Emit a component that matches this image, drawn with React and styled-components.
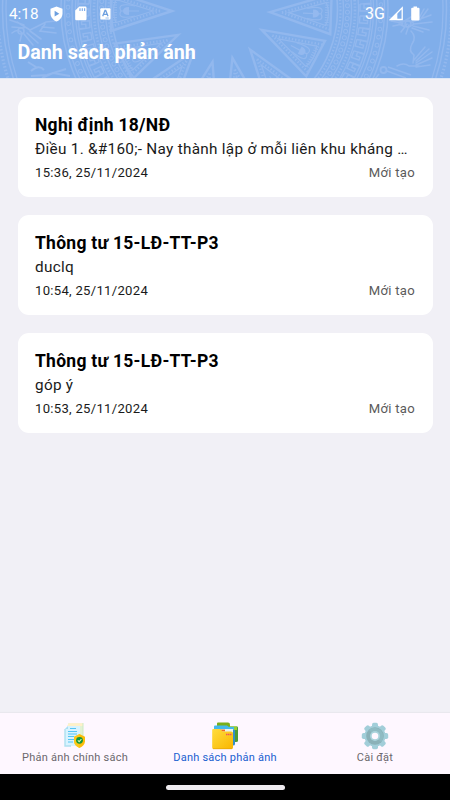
import React from 'react';
import styled, { createGlobalStyle } from 'styled-components';

const GlobalStyle = createGlobalStyle`
  * { box-sizing: border-box; }
  body { margin: 0; font-family: Roboto, 'Noto Sans', sans-serif; }
`;

const Screen = styled.div`
  width: 450px;
  height: 800px;
  display: flex;
  flex-direction: column;
  overflow: hidden;
  background: #f1f0f6;
`;

const Header = styled.header`
  position: relative;
  height: 79px;
  flex: none;
  overflow: hidden;
  background: #80aeea;
  color: #fff;
`;

const Pattern = styled.svg`
  position: absolute;
  inset: 0;
`;

const HeaderContent = styled.div`
  position: relative;
`;

const StatusBar = styled.div`
  height: 27px;
  padding: 0 30px 0 9px;
  display: flex;
  align-items: center;
`;

const StatusText = styled.span`
  font-size: ${(p) => p.$size}px;
  line-height: 27px;
  padding-top: ${(p) => p.$drop || 0}px;
  width: ${(p) => p.$width}px;
  white-space: nowrap;
`;

const StatusIcons = styled.div`
  display: flex;
  align-items: center;
  flex: 1;
`;

const PageTitle = styled.h1`
  margin: 0;
  padding-left: 17.5px;
  font-size: 19.7px;
  line-height: 24px;
  margin-top: 14px;
  font-weight: 700;
`;

const List = styled.main`
  flex: 1;
  padding: 17.5px;
  display: flex;
  flex-direction: column;
  gap: 17.5px;
`;

const Card = styled.article`
  height: 100.5px;
  flex: none;
  padding: 16px 17.5px 0;
  border-radius: 11px;
  background: #fff;
  color: #000;
`;

const CardTitle = styled.h2`
  margin: 0 0 -1px;
  font-size: 17.5px;
  line-height: 25px;
  font-weight: 700;
  letter-spacing: 0.27px;
`;

const CardText = styled.p`
  margin: 0 0 1px;
  font-size: 15.3px;
  line-height: 24px;
  letter-spacing: 0.29px;
  color: #1a1a1a;
  white-space: nowrap;
`;

const CardMeta = styled.div`
  display: flex;
  justify-content: space-between;
  font-size: 13.1px;
  line-height: 22px;
  letter-spacing: 0.29px;
  color: #1a1a1a;
`;

const Status = styled.span`
  color: #5a5a5a;
`;

const Nav = styled.nav`
  height: 61px;
  flex: none;
  display: grid;
  grid-template-columns: repeat(3, 1fr);
  background: #fef7ff;
  box-shadow: 0 -1px 1px rgba(0, 0, 0, 0.03);
`;

const NavItem = styled.div`
  display: flex;
  flex-direction: column;
  align-items: center;
  padding-top: 9px;
  font-size: 11px;
  line-height: 16px;
  letter-spacing: 0.23px;
  color: ${(p) => (p.$active ? '#1a5fd0' : '#6b686d')};
  white-space: nowrap;

  svg { display: block; }
`;

const GestureBar = styled.div`
  height: 26px;
  flex: none;
  display: flex;
  justify-content: center;
  padding-top: 10.5px;
  background: #000;
`;

const Handle = styled.div`
  width: 119px;
  height: 5px;
  border-radius: 3px;
  background: #eeebef;
`;

const spikes = [
  [174, 11, 180], [180, 34, 154], [195, 50, 128], [213, 60, 104],
  [232, 56, 78], [249, 48, 54], [260, 29, 28], [268, 12, 2],
  [182, -14, 206], [262, -14, -26],
];

function Spike({ x, y, angle }) {
  return (
    <g transform={`translate(${x} ${y}) rotate(${angle})`}>
      <path d="M2 0 63 -20 V20Z" strokeWidth="2.4" />
      <path d="M14 0 64 -16 M14 0 64 16" strokeWidth="2.4" strokeDasharray="1.3 2" />
      <path d="M21 0 58 -11.5 Q63 0 58 11.5Z" strokeWidth="1.3" />
      <path d="M35 0H53 M39 -5Q58 -9 53 0Q58 9 39 5" strokeWidth="1.2" />
      <path d="M45 -4Q51 -4 51 0Q51 4 45 4Z" fill="#94b9ef" stroke="none" />
      <path d="M59 -12V12" strokeWidth="4" strokeDasharray="1 1.5" />
    </g>
  );
}

function Bird() {
  return (
    <g strokeWidth="1.5" strokeLinecap="round">
      <path d="M0 5 14 10 22 5 M2 9 13 11 M4 14 14 12 M12 20 18 12 M17 22 20 13" />
      <path d="M10 11Q20 5 25 12Q19 17 12 13M23 10 42 3M25 12 43 10M24 14 40 18M29 8 35 -3M31 8 39 -3M23 16 34 20" />
      <circle cx="19" cy="12" r="3" />
      <path d="M22 19Q28 25 23 32Q19 39 25 43L24 51M25 48 36 35M27 49 40 37M27 51 43 40M27 53 43 46M27 55 41 53M8 54Q15 50 20 54L30 54" />
    </g>
  );
}

function DrumPattern() {
  const ring = (r, width, dash) => (
    <circle key={`${r}-${width}`} cx="224.5" cy="10" r={r} strokeWidth={width} strokeDasharray={dash} />
  );
  const motifs = [];
  for (let a = -20; a <= 200; a += 3) {
    motifs.push(
      <g key={a} transform={`rotate(${a} 224.5 10)`}>
        <circle cx="347.5" cy="10" r="2" strokeWidth="1" />
        <circle cx="381" cy="10" r="1.9" strokeWidth="1" />
      </g>
    );
  }
  const keys = [];
  for (let a = -20; a <= 200; a += 5) {
    keys.push(
      <path
        key={a}
        transform={`rotate(${a} 224.5 10)`}
        d="M360 4V11H368V8H364V4H371V16H360"
        strokeWidth="1.4"
      />
    );
  }
  return (
    <Pattern width="450" height="79" fill="none" stroke="#92b8ee">
      {spikes.map(([x, y, a]) => <Spike key={`${x}-${a}`} x={x} y={y} angle={a} />)}
      {ring(113, 1.6)}
      {ring(116, 2.2, '1.4 2')}
      {ring(119, 1.4)}
      {ring(127, 1.4)}
      {ring(130.5, 2.6, '1.4 1.8')}
      {ring(134, 1.2)}
      {ring(149, 1.3)}
      {ring(152.5, 1.4)}
      {ring(160, 1.4)}
      {ring(163.5, 1.5)}
      {motifs}
      {keys}
      {ring(218.5, 1.3)}
      {ring(222, 1.5)}
      {ring(227, 3.2, '1.5 2')}
      <g transform="translate(389 12)"><Bird /></g>
      <g strokeWidth="1.6" strokeLinecap="round">
        <path d="M10 20 24 25M12 27 24 28M17 22 30 30 46 22 56 21M30 31 41 39M27 33 38 43M24 34 33 45M45 24 40 31 56 33M42 27 54 28M12 33Q18 28 22 33L20 41" />
        <circle cx="21" cy="31" r="3" />
      </g>
      <circle cx="383.5" cy="70" r="3" strokeWidth="1.8" />
      <path d="M388 67 411 75 M387 71 406 78 M379 74 375 79" strokeWidth="1.5" />
      <path d="M31 71Q39 64 44 70M31 76 47 75 66 69M42 78 53 73 70 76M36 67 28 62" strokeWidth="2" />
      <path d="M0 78.5H450" stroke="#dce7f7" strokeWidth="1" />
    </Pattern>
  );
}

const ShieldPlay = () => (
  <svg width="13" height="16" viewBox="0 0 13 16">
    <path d="M6.5 .5 12.5 2.7V7.5C12.5 11 10 14.2 6.5 15.5 3 14.2 .5 11 .5 7.5V2.7Z" fill="#fff" />
    <path d="M4.6 4.8 9.3 7.8 4.6 10.5Z" fill="#6c9fdf" />
  </svg>
);

const SdCard = () => (
  <svg width="12" height="15" viewBox="0 0 12 15">
    <path d="M4.3 .5H10.3Q11.5 .5 11.5 1.7V13Q11.5 14.3 10.3 14.3H1.4Q.2 14.3 .2 13V4.6Z" fill="#fff" />
    <path d="M5 2.3V5M7.3 2.3V5M9.6 2.3V5" stroke="#80aeea" strokeWidth="1.2" />
  </svg>
);

const LetterBadge = () => (
  <svg width="11" height="12" viewBox="0 0 11 12">
    <rect x=".3" y=".3" width="10.2" height="11.2" rx="1" fill="#fff" />
    <path d="M2.7 8.2 5 2.5H5.7L8 8.2M3.7 6.4H7" fill="none" stroke="#6c9fdf" strokeWidth="1.3" />
    <path d="M5.5 10H8.8" stroke="#80aeea" strokeWidth=".8" />
  </svg>
);

const Signal = () => (
  <svg width="15" height="15" viewBox="0 0 15 15">
    <path d="M1.5 13.5 13.2 1.8V13.5Z" fill="none" stroke="#fff" strokeWidth="1.3" />
    <path d="M1 14 8.3 7V14Z" fill="#fff" />
  </svg>
);

const Battery = () => (
  <svg width="9" height="15" viewBox="0 0 9 15">
    <path d="M2.5 .4H6V1.8H7.5Q8.5 1.8 8.5 2.8V13.5Q8.5 14.5 7.5 14.5H1.2Q.2 14.5 .2 13.5V2.8Q.2 1.8 1.2 1.8H2.5Z" fill="#fff" />
  </svg>
);

const At = styled.span`
  display: flex;
  margin-left: ${(p) => p.$gap}px;
`;

const DocumentIcon = () => (
  <svg width="28" height="28" viewBox="0 0 28 28">
    <path d="M7 1.3H22V23H7Z" fill="#e2f2d4" />
    <path d="M8 1.3H22V4H6Z" fill="#fff0c9" />
    <path d="M22 1V16" stroke="#cdebc5" />
    <path d="M7 4H19V24H4V7Z" fill="#d8f3ff" />
    <path d="M4 7V24H10" fill="none" stroke="#aee0f0" strokeWidth="1.4" />
    <path d="M7 4V7H4Z" fill="#a9dff2" />
    <path d="M9 6.5H15M7 9.5H16M7 12H16M7 14.5H13M7 17.5H13M7 20H12" stroke="#55c5f4" strokeWidth="1" />
    <path d="M18.5 12 24 14.7V19.5Q23.5 23.5 18.5 26 13.5 23.5 13 19.5V14.7Z" fill="#fbbd0a" />
    <path d="M18.5 12V26Q13.5 23.5 13 19.5V14.7Z" fill="#ffcf25" opacity=".6" />
    <circle cx="18.5" cy="18.3" r="3.4" fill="#14963a" />
    <path d="M16.8 18.3 18.2 19.6 20.4 17.2" fill="none" stroke="#d8f4b4" strokeWidth="1.1" />
  </svg>
);

const FoldersIcon = () => (
  <svg width="28" height="28" viewBox="0 0 28 28">
    <defs>
      <linearGradient id="folder" x2="1" y2="1">
        <stop stopColor="#ffdd3e" />
        <stop offset="1" stopColor="#f9b600" />
      </linearGradient>
    </defs>
    <path d="M6 1.3Q6 .5 7 .5H17Q19 .5 19 2.5V5H6Z" fill="#79ae19" />
    <path d="M18 4.5H26Q27 4.5 27 5.5V19Q27 20 25 20H18Z" fill="#4d9b36" />
    <path d="M18 4.5H26V8H18Z" fill="#99ce32" />
    <path d="M3 4.7Q3 3.6 4 3.6H16L18 5H23V8H3Z" fill="#44b9eb" />
    <path d="M17 8H24V22Q24 23.5 22 23.5H17Z" fill="#348fc8" />
    <path d="M18 8.5H22V21H18Z" fill="#a8e5f5" />
    <path d="M10 7H22V11H10Z" fill="#e9f3ee" />
    <path d="M10 7.5H14V9.5H10Z" fill="#f06a22" />
    <path d="M1.2 8Q1.2 7 2.2 7H9.5L11.5 9.5H20Q22 9.5 22 11V25.5Q22 27 20.5 27H2.7Q1.2 27 1.2 25.5Z" fill="url(#folder)" />
    <path d="M15 12.5H20.5" stroke="#ef5360" strokeWidth="1.3" strokeDasharray="1.5 .5" />
    <path d="M2 26.7H21" stroke="#e7a40a" strokeWidth=".7" />
  </svg>
);

const GearIcon = () => (
  <svg width="28" height="28" viewBox="0 0 28 28">
    <g fill="#a2ced9">
      {[0, 45, 90, 135].map((a) => (
        <rect key={a} x="11" y=".8" width="6" height="26.4" rx="1.7" transform={`rotate(${a} 14 14)`} />
      ))}
      <circle cx="14" cy="14" r="10.6" />
    </g>
    <circle cx="14" cy="14" r="8.8" fill="#8ab1b8" />
    <path d="M7.8 7.8A8.8 8.8 0 0 1 20.2 20.2Z" fill="#8fbbc3" />
    <circle cx="14" cy="14" r="5" fill="#a9d3dc" />
    <circle cx="14" cy="14" r="3.3" fill="#fef7ff" />
  </svg>
);

const reports = [
  { title: 'Nghị định 18/NĐ', text: 'Điều 1. &#160;- Nay thành lập ở mỗi liên khu kháng …', time: '15:36, 25/11/2024' },
  { title: 'Thông tư 15-LĐ-TT-P3', text: 'duclq', time: '10:54, 25/11/2024' },
  { title: 'Thông tư 15-LĐ-TT-P3', text: 'góp ý', time: '10:53, 25/11/2024' },
];

export default function App() {
  return (
    <Screen>
      <GlobalStyle />
      <Header>
        <DrumPattern />
        <HeaderContent>
          <StatusBar>
            <StatusText $size={15.3} $width={41} $drop={1}>4:18</StatusText>
            <StatusIcons>
              <At $gap={0}><ShieldPlay /></At>
              <At $gap={12}><SdCard /></At>
              <At $gap={13}><LetterBadge /></At>
            </StatusIcons>
            <StatusText $size={16} $width={20}>3G</StatusText>
            <At $gap={4}><Signal /></At>
            <At $gap={7}><Battery /></At>
          </StatusBar>
          <PageTitle>Danh sách phản ánh</PageTitle>
        </HeaderContent>
      </Header>
      <List>
        {reports.map((r) => (
          <Card key={r.time}>
            <CardTitle>{r.title}</CardTitle>
            <CardText>{r.text}</CardText>
            <CardMeta>
              <span>{r.time}</span>
              <Status>Mới tạo</Status>
            </CardMeta>
          </Card>
        ))}
      </List>
      <Nav>
        <NavItem><DocumentIcon />Phản ánh chính sách</NavItem>
        <NavItem $active><FoldersIcon />Danh sách phản ánh</NavItem>
        <NavItem><GearIcon />Cài đặt</NavItem>
      </Nav>
      <GestureBar><Handle /></GestureBar>
    </Screen>
  );
}
